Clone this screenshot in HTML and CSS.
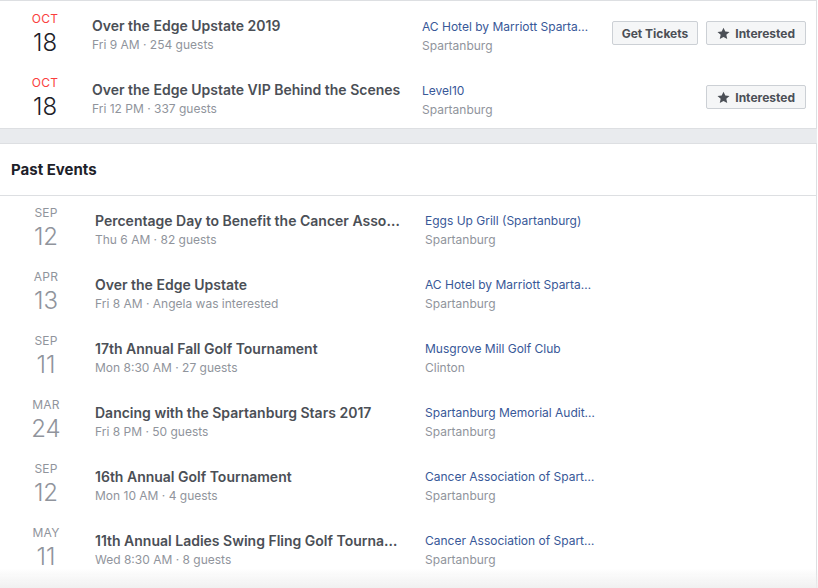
FILE: index.html
```html
<!DOCTYPE html>
<html lang="en">
<head>
<meta charset="utf-8">
<title>Events</title>
<link rel="stylesheet" href="styles.css">
</head>
<body>
<div class="page">
  <section class="card upcoming">
    <div class="row">
      <div class="date"><div class="month">OCT</div><div class="day">18</div></div>
      <div class="info"><div class="title">Over the Edge Upstate 2019</div><div class="sub">Fri 9 AM · 254 guests</div></div>
      <div class="loc"><a class="place">AC Hotel by Marriott Spartanburg</a><div class="city">Spartanburg</div></div>
      <div class="actions">
        <button class="btn btn-tickets">Get Tickets</button>
        <button class="btn"><svg class="star" viewBox="0 0 24 24" width="13" height="13"><path d="M12 1.2l3.3 7.2 7.8.8-5.9 5.3 1.7 7.7L12 18.3l-6.9 3.9 1.7-7.7L.9 9.2l7.8-.8z"/></svg>Interested</button>
      </div>
    </div>
    <div class="row">
      <div class="date"><div class="month">OCT</div><div class="day">18</div></div>
      <div class="info"><div class="title">Over the Edge Upstate VIP Behind the Scenes</div><div class="sub">Fri 12 PM · 337 guests</div></div>
      <div class="loc"><a class="place">Level10</a><div class="city">Spartanburg</div></div>
      <div class="actions">
        <button class="btn"><svg class="star" viewBox="0 0 24 24" width="13" height="13"><path d="M12 1.2l3.3 7.2 7.8.8-5.9 5.3 1.7 7.7L12 18.3l-6.9 3.9 1.7-7.7L.9 9.2l7.8-.8z"/></svg>Interested</button>
      </div>
    </div>
  </section>

  <section class="card past">
    <h2 class="heading">Past Events</h2>
    <div class="row">
      <div class="date"><div class="month">SEP</div><div class="day">12</div></div>
      <div class="info"><div class="title">Percentage Day to Benefit the Cancer Association of Spartanburg</div><div class="sub">Thu 6 AM · 82 guests</div></div>
      <div class="loc"><a class="place">Eggs Up Grill (Spartanburg)</a><div class="city">Spartanburg</div></div>
    </div>
    <div class="row">
      <div class="date"><div class="month">APR</div><div class="day">13</div></div>
      <div class="info"><div class="title">Over the Edge Upstate</div><div class="sub">Fri 8 AM · Angela was interested</div></div>
      <div class="loc"><a class="place">AC Hotel by Marriott Spartanburg</a><div class="city">Spartanburg</div></div>
    </div>
    <div class="row">
      <div class="date"><div class="month">SEP</div><div class="day">11</div></div>
      <div class="info"><div class="title">17th Annual Fall Golf Tournament</div><div class="sub">Mon 8:30 AM · 27 guests</div></div>
      <div class="loc"><a class="place">Musgrove Mill Golf Club</a><div class="city">Clinton</div></div>
    </div>
    <div class="row">
      <div class="date"><div class="month">MAR</div><div class="day">24</div></div>
      <div class="info"><div class="title">Dancing with the Spartanburg Stars 2017</div><div class="sub">Fri 8 PM · 50 guests</div></div>
      <div class="loc"><a class="place">Spartanburg Memorial Auditorium</a><div class="city">Spartanburg</div></div>
    </div>
    <div class="row">
      <div class="date"><div class="month">SEP</div><div class="day">12</div></div>
      <div class="info"><div class="title">16th Annual Golf Tournament</div><div class="sub">Mon 10 AM · 4 guests</div></div>
      <div class="loc"><a class="place">Cancer Association of Spartanburg</a><div class="city">Spartanburg</div></div>
    </div>
    <div class="row">
      <div class="date"><div class="month">MAY</div><div class="day">11</div></div>
      <div class="info"><div class="title">11th Annual Ladies Swing Fling Golf Tournament</div><div class="sub">Wed 8:30 AM · 8 guests</div></div>
      <div class="loc"><a class="place">Cancer Association of Spartanburg</a><div class="city">Spartanburg</div></div>
    </div>
  </section>
</div>
<div class="fade"></div>
</body>
</html>
```

FILE: styles.css
```css
* { box-sizing: border-box; }
html, body { margin: 0; padding: 0; background: #fff; }
body {
  font-family: Inter, "Liberation Sans", Arial, sans-serif;
  color: #1d2129;
  overflow: hidden;
  height: 588px;
}
.page {
  width: 817px;
  background: #e9ebee;
}
.card {
  background: #fff;
  border-right: 1px solid #dddfe2;
}
.upcoming {
  border-top: 1px solid #dddfe2;
  border-bottom: 1px solid #dddfe2;
  margin-bottom: 14px;
}
.upcoming .row:last-child { height: 63px; }
.past {
  border-top: 1px solid #dddfe2;
  min-height: 460px;
}
.heading {
  margin: 0;
  height: 52px;
  padding: 17px 0 0 11px;
  font-size: 15px;
  line-height: 18px;
  font-weight: 700;
  color: #1d2129;
  border-bottom: 1px solid #dddfe2;
}
.row {
  display: flex;
  align-items: flex-start;
  height: 64px;
  padding-left: 16px;
  padding-right: 10px;
}
.past .row { padding-left: 17px; }
.date {
  width: 58px;
  flex: none;
  text-align: center;
  padding-top: 11px;
}
.past .date { padding-top: 10px; }
.month {
  font-size: 12px;
  line-height: 14px;
  color: #fa3e3e;
  letter-spacing: 0.2px;
}
.day {
  font-size: 24px;
  line-height: 28px;
  margin-top: 3px;
  font-weight: 300;
  color: #1d2129;
}
.past .month, .past .day { color: #90949c; }
.info {
  width: 330px;
  flex: none;
  margin-left: 18px;
  padding-top: 16px;
  padding-right: 18px;
  min-width: 0;
}
.past .info { margin-left: 20px; }
.title {
  font-size: 14px;
  line-height: 18px;
  font-weight: 600;
  color: #4b4f56;
  white-space: nowrap;
  overflow: hidden;
  text-overflow: ellipsis;
}
.sub, .city {
  font-size: 12px;
  line-height: 16px;
  margin-top: 2px;
  color: #90949c;
  white-space: nowrap;
}
.loc {
  width: 170px;
  flex: none;
  padding-top: 17px;
  min-width: 0;
}
.past .loc { padding-top: 16px; }
.place {
  display: block;
  font-size: 12px;
  line-height: 18px;
  color: #385898;
  white-space: nowrap;
  overflow: hidden;
  text-overflow: ellipsis;
}
.actions {
  margin-left: auto;
  padding-top: 20px;
  display: flex;
  gap: 8px;
}
.btn {
  height: 24px;
  display: flex;
  align-items: center;
  gap: 5px;
  padding: 0 10px;
  font-family: inherit;
  font-size: 12px;
  font-weight: 700;
  color: #4b4f56;
  background: #f5f6f7;
  border: 1px solid #ccd0d5;
  border-radius: 2px;
}
.btn-tickets { padding: 0 9px; }
.star { fill: #4b4f56; }
.fade {
  position: fixed;
  left: 0;
  right: 0;
  bottom: 0;
  height: 20px;
  background: linear-gradient(to bottom, rgba(240,240,240,0), rgba(238,238,238,0.85));
  pointer-events: none;
}
```
